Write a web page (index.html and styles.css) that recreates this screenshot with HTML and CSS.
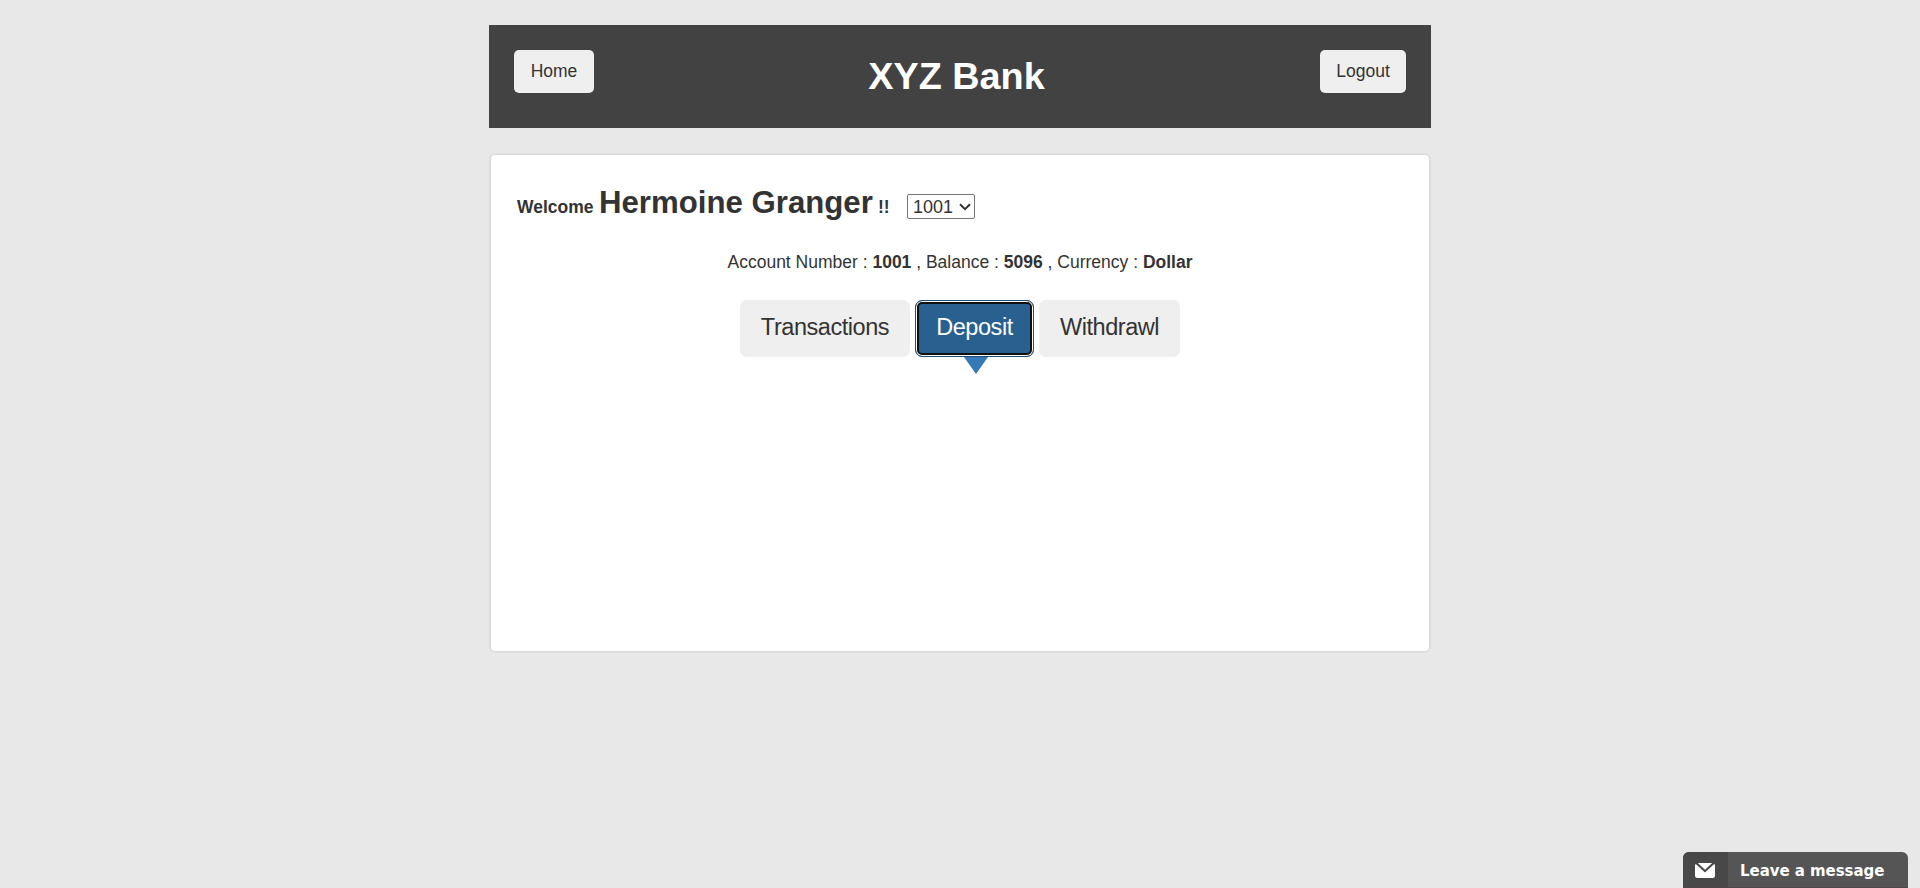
FILE: index.html
```html
<!DOCTYPE html>
<html lang="en">
<head>
<meta charset="utf-8">
<title>XYZ Bank</title>
<link rel="stylesheet" href="styles.css">
</head>
<body>
<main class="page">
  <header class="header">
    <button class="btn home">Home</button>
    <h1 class="title">XYZ Bank</h1>
    <button class="btn logout">Logout</button>
  </header>
  <section class="panel">
    <div class="welcome">
      <strong class="hello">Welcome</strong>
      <strong class="name">Hermoine Granger</strong>
      <strong class="bangs">!!</strong>
      <div class="account-select">
        <span>1001</span>
        <svg width="12" height="8" viewBox="0 0 12 8"><path d="M1 1.2l5 5 5-5" fill="none" stroke="#333" stroke-width="2"/></svg>
      </div>
    </div>
    <p class="summary"><span class="summary-text">Account Number : <strong>1001</strong> , Balance : <strong>5096</strong> , Currency : <strong>Dollar</strong></span></p>
    <nav class="tabs">
      <button class="tab transactions">Transactions</button>
      <button class="tab deposit">Deposit</button>
      <button class="tab withdrawl">Withdrawl</button>
    </nav>
  </section>
</main>
<aside class="chat">
  <div class="chat-icon">
    <svg width="20" height="15" viewBox="0 0 20 15"><path d="M2.8 0H17.2L10 6.7z" fill="#fff"/><path d="M0 2.4Q0 1.6.8 1L10 9.5 19.2 1Q20 1.6 20 2.4V12.5Q20 15 17.5 15H2.5Q0 15 0 12.5z" fill="#fff"/></svg>
  </div>
  <div class="chat-label">Leave a message</div>
</aside>
</body>
</html>
```
FILE: styles.css
```css
* { box-sizing: border-box; }
body {
  margin: 0;
  height: 888px;
  overflow: hidden;
  background: #e8e8e8;
  color: #333;
  font-family: "Liberation Sans", Arial, sans-serif;
  font-size: 18px;
}
.page { width: 942px; margin: 0 auto; padding-top: 25px; }
.header {
  display: flex;
  justify-content: space-between;
  height: 103px;
  padding: 25px;
  background: #424242;
}
button { border: 0; padding: 0; font-family: inherit; color: #333; background: #efefef; white-space: nowrap; }
.btn { height: 43px; border-radius: 5px; font-size: 17.5px; }
.home { width: 80px; }
.logout { width: 86px; }
.title { margin: 0; padding-right: 1px; color: #fff; font-size: 37.8px; line-height: 52px; }
.panel {
  height: 500px;
  margin-top: 25px;
  padding: 27px 26px 25px;
  border: 2px solid #ddd;
  border-radius: 6px;
  background: #fff;
}
.welcome { display: flex; align-items: baseline; height: 46px; }
.hello { font-size: 17.5px; width: 82px; }
.name { font-size: 31.2px; line-height: 42px; width: 279px; white-space: nowrap; }
.bangs { font-size: 17.5px; width: 29px; }
.account-select {
  display: flex;
  align-items: center;
  gap: 6px;
  width: 68px;
  height: 25px;
  padding: 2px 0 0 5px;
  border: 1px solid #767676;
  border-radius: 2px;
}
.account-select svg { margin-top: -2px; }
.summary { margin: 21px 0 0; text-align: center; line-height: 26px; font-size: 17.5px; }
.tabs { display: flex; justify-content: center; gap: 5px; margin-top: 25px; }
.tab { height: 57px; border-radius: 7px; font-size: 23.5px; letter-spacing: -0.45px; padding-bottom: 3px; }
.transactions { width: 170px; }
.deposit {
  position: relative;
  width: 119px;
  color: #fff;
  background: #286090;
  border: 1px solid #204d74;
  box-shadow: inset 0 0 0 1px #fff, inset 0 0 0 3px #101010;
}
.deposit::after {
  content: "";
  position: absolute;
  left: 48px;
  top: 56px;
  border: solid transparent;
  border-width: 17px 12px 0;
  border-top-color: #337ab7;
}
.withdrawl { width: 141px; }
.chat {
  position: absolute;
  right: 12px;
  bottom: 0;
  display: flex;
  width: 225px;
  height: 36px;
  overflow: hidden;
  border-radius: 6px 6px 0 0;
  background: #555;
  border-bottom: 1px solid #504848;
}
.chat-icon { width: 45px; padding: 10px 0 0 12px; background: #484848; }
.chat-label {
  padding-left: 12px;
  color: #fff;
  font: bold 15px/39px "DejaVu Sans", Verdana, sans-serif;
  letter-spacing: -0.05px;
  white-space: nowrap;
}
```
